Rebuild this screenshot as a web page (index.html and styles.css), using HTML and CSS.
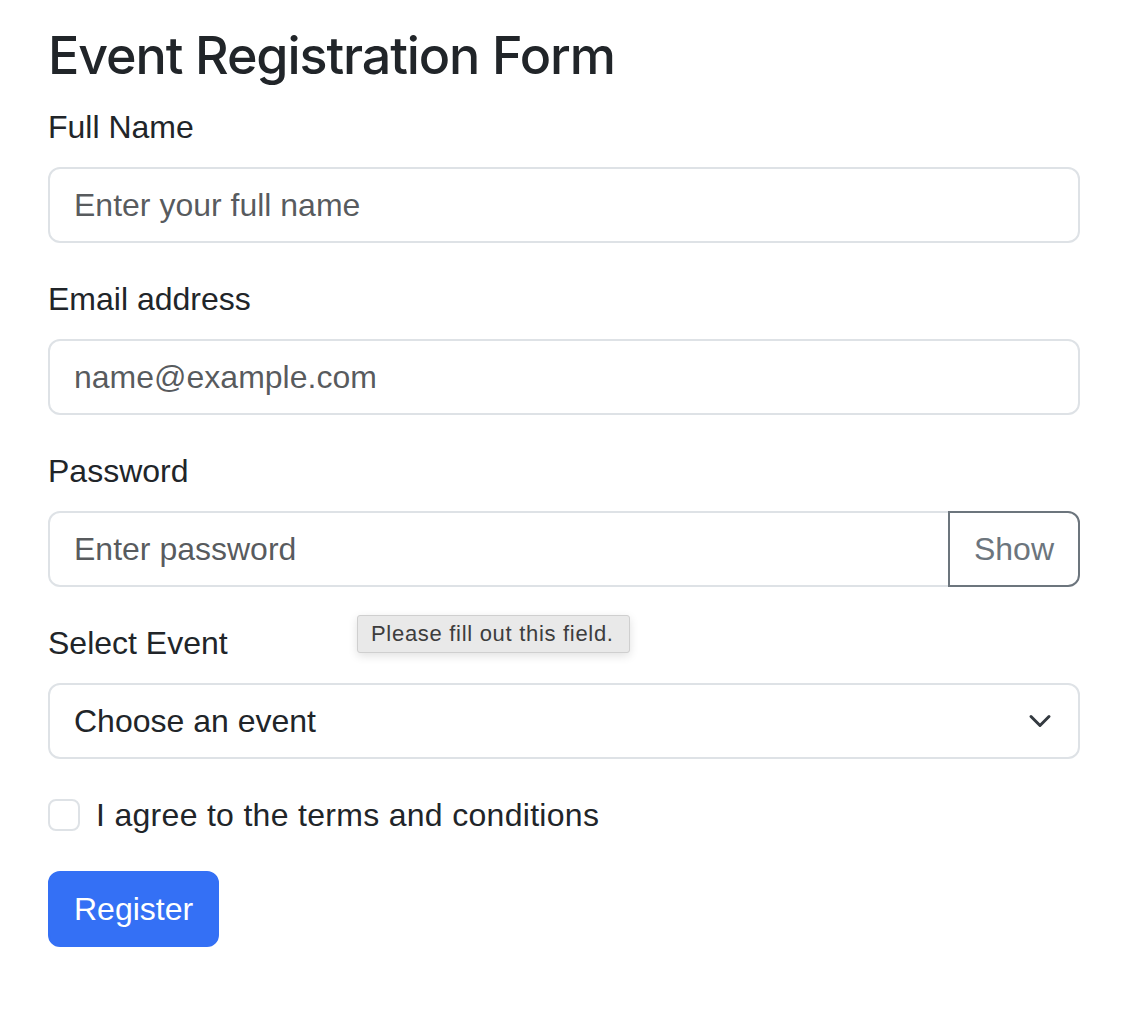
FILE: index.html
```html
<!DOCTYPE html>
<html lang="en">
<head>
<meta charset="utf-8">
<title>Event Registration Form</title>
<link rel="stylesheet" href="styles.css">
</head>
<body>
<div class="page">
  <h2 class="title">Event Registration Form</h2>
  <form class="form">
    <div class="field">
      <label class="label" for="name">Full Name</label>
      <input class="control" id="name" type="text" placeholder="Enter your full name">
    </div>
    <div class="field">
      <label class="label" for="email">Email address</label>
      <input class="control" id="email" type="email" placeholder="name@example.com">
    </div>
    <div class="field">
      <label class="label" for="pw">Password</label>
      <div class="input-group">
        <input class="control grow" id="pw" type="password" placeholder="Enter password">
        <button class="btn-outline" type="button">Show</button>
      </div>
    </div>
    <div class="field">
      <label class="label" for="event">Select Event</label>
      <div class="select-wrap">
        <select class="control select" id="event">
          <option>Choose an event</option>
        </select>
        <svg class="chevron" width="24" height="24" viewBox="0 0 16 16" aria-hidden="true">
          <path fill="none" stroke="#343a40" stroke-linecap="round" stroke-linejoin="round" stroke-width="2" d="m2 5 6 6 6-6"/>
        </svg>
      </div>
    </div>
    <div class="field check">
      <span class="checkbox"></span>
      <span class="check-label">I agree to the terms and conditions</span>
    </div>
    <button class="btn-primary" type="button">Register</button>
  </form>
  <div class="bubble">Please fill out this field.</div>
</div>
</body>
</html>
```

FILE: styles.css
```css
* { box-sizing: border-box; }

html, body {
  margin: 0;
  padding: 0;
  background: #fff;
}

body {
  font-family: "Liberation Sans", Arial, sans-serif;
  color: #212529;
}

.page {
  position: relative;
  width: 1128px;
  padding: 25px 48px 0 48px;
}

.title {
  margin: 0 0 16px 0;
  font-family: Inter, "Liberation Sans", sans-serif;
  font-size: 52px;
  font-weight: 500;
  letter-spacing: -1.1px;
  line-height: 1.2;
  color: #212529;
}

.form {
  display: flex;
  flex-direction: column;
  width: 1032px;
}

.field {
  display: flex;
  flex-direction: column;
  margin-bottom: 32px;
}

.label {
  display: block;
  font-size: 32px;
  line-height: 48px;
  margin-bottom: 16px;
}

.control {
  display: block;
  width: 100%;
  height: 76px;
  padding: 12px 24px;
  font-family: inherit;
  font-size: 32px;
  line-height: 48px;
  color: #212529;
  background: #fff;
  border: 2px solid #dee2e6;
  border-radius: 12px;
  outline: none;
  appearance: none;
  -webkit-appearance: none;
}

.control::placeholder {
  color: rgba(33, 37, 41, 0.75);
}

.input-group {
  display: flex;
}

.grow {
  flex: 1;
  width: auto;
  border-top-right-radius: 0;
  border-bottom-right-radius: 0;
}

.btn-outline {
  margin-left: -2px;
  padding: 12px 24px;
  height: 76px;
  font-family: inherit;
  font-size: 32px;
  line-height: 48px;
  color: #6c757d;
  background: #fff;
  border: 2px solid #6c757d;
  border-radius: 0 12px 12px 0;
}

.select-wrap {
  position: relative;
}

.select {
  padding-right: 72px;
}

.chevron {
  position: absolute;
  right: 28px;
  top: 26px;
  pointer-events: none;
}

.check {
  flex-direction: row;
  align-items: flex-start;
  min-height: 48px;
  gap: 16px;
}

.checkbox {
  width: 32px;
  height: 32px;
  margin-top: 8px;
  border: 2px solid #dee2e6;
  border-radius: 8px;
  background: #fff;
  flex: none;
}

.check-label {
  font-size: 32px;
  line-height: 48px;
  letter-spacing: 0.3px;
}

.btn-primary {
  align-self: flex-start;
  padding: 12px 24px;
  height: 76px;
  font-family: inherit;
  font-size: 32px;
  line-height: 48px;
  color: #fff;
  background: #3470f5;
  border: 2px solid #3470f5;
  border-radius: 12px;
}

.bubble {
  position: absolute;
  left: 357px;
  top: 615px;
  height: 38px;
  padding: 0 15px 0 13px;
  font-size: 22px;
  letter-spacing: 0.7px;
  line-height: 36px;
  color: #3d3d3d;
  background: #e9e9e9;
  border: 1px solid #cfcfcf;
  border-radius: 3px;
  box-shadow: 0 3px 10px rgba(0, 0, 0, 0.12);
  white-space: nowrap;
}
```
